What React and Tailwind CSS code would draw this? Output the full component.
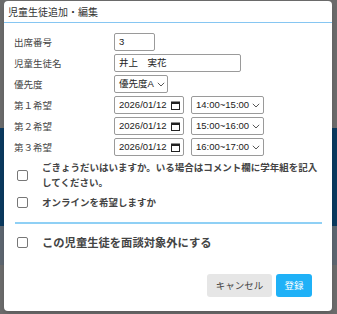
import React from 'react';

const font = { fontFamily: '"Noto Sans CJK JP", "Noto Sans", sans-serif' };
const inputFont = { fontFamily: '"Liberation Sans", "Noto Sans CJK JP", sans-serif' };

function Chevron() {
  return (
    <svg width="8" height="5" viewBox="0 0 8 5" className="ml-auto mr-[3px] shrink-0">
      <path d="M0.8 0.8l3.2 3.2L7.2 0.8" fill="none" stroke="#444" strokeWidth="0.9" />
    </svg>
  );
}

function CalendarIcon() {
  return (
    <svg width="9" height="9" viewBox="0 0 9 9" className="ml-auto mr-[3px] shrink-0">
      <rect x="0.5" y="1" width="8" height="7.5" fill="none" stroke="#222" strokeWidth="1" />
      <rect x="0.5" y="1" width="8" height="2" fill="#222" />
    </svg>
  );
}

function Box({ w, children }) {
  return (
    <div
      className={`flex items-center gap-[3px] h-full border border-[#9a9a9a] rounded-[2px] pl-[4px] text-[9.5px] text-[#222] bg-white whitespace-nowrap overflow-hidden ${w}`}
      style={inputFont}
    >
      {children}
    </div>
  );
}

function Row({ label, children }) {
  return (
    <div className="flex items-center h-[18px]">
      <div className="w-[100px] text-[9.5px] text-[#444]">{label}</div>
      <div className="flex items-center gap-[7px] h-full">{children}</div>
    </div>
  );
}

function Check() {
  return <div className="w-[11px] h-[11px] shrink-0 border border-[#777] rounded-[2px] bg-white" />;
}

function Wish({ label, time }) {
  return (
    <Row label={label}>
      <Box w="w-[70px]">
        <span>2026/01/12</span>
        <CalendarIcon />
      </Box>
      <Box w="w-[73px]">
        <span>{time}</span>
        <Chevron />
      </Box>
    </Row>
  );
}

export default function App() {
  return (
    <div className="relative w-[337px] h-[314px] overflow-hidden" style={font}>
      <div className="flex flex-col h-full">
        <div className="h-[128px] bg-[#6b6b6b]" />
        <div className="h-[98px] bg-[#0b3a5f]" />
        <div className="h-[39px] bg-[#5d6670]" />
        <div className="flex-1 bg-[#6b6b6b]" />
      </div>

      <div className="absolute left-[4px] top-[1px] w-[328px] h-[310px] bg-white rounded-[4px] shadow-md flex flex-col">
        <div className="h-[22px] flex items-center pl-[4px] border-b-[1.5px] border-[#86c6f2] text-[10px] text-[#333]">
          児童生徒追加・編集
        </div>

        <div className="flex flex-col pl-[10px] pr-[10px] pt-[10px]">
          <div className="flex flex-col gap-[3px]">
            <Row label="出席番号">
              <Box w="w-[41px]">3</Box>
            </Row>
            <Row label="児童生徒名">
              <Box w="w-[127px]">井上　実花</Box>
            </Row>
            <Row label="優先度">
              <Box w="w-[54px]">
                <span>優先度A</span>
                <Chevron />
              </Box>
            </Row>
            <Wish label="第１希望" time="14:00~15:00" />
            <Wish label="第２希望" time="15:00~16:00" />
            <Wish label="第３希望" time="16:00~17:00" />
          </div>

          <div className="flex items-center mt-[4px] pl-[3px] gap-[14px]">
            <Check />
            <div className="text-[9.5px] leading-[15px] font-bold text-[#444]">
              ごきょうだいはいますか。いる場合はコメント欄に学年組を記入してください。
            </div>
          </div>

          <div className="flex items-center mt-[5px] pl-[3px] gap-[14px] h-[15px]">
            <Check />
            <div className="text-[9.5px] leading-[15px] font-bold text-[#444]">オンラインを希望しますか</div>
          </div>

          <div className="mt-[12px] ml-[1px] h-[2px] bg-[#8fd0f5]" />

          <div className="flex items-center mt-[9px] pl-[3px] gap-[14px] h-[18px]">
            <Check />
            <div className="text-[11.3px] leading-[18px] font-bold text-[#444]">この児童生徒を面談対象外にする</div>
          </div>
        </div>

        <div className="mt-auto flex justify-end gap-[4px] pr-[20px] pb-[14px]">
          <button className="h-[23px] w-[65px] rounded-[3px] bg-[#e6e6e6] text-[9.5px] text-[#444]">キャンセル</button>
          <button className="h-[23px] w-[36px] rounded-[3px] bg-[#1fb1f7] text-[9.5px] text-white">登録</button>
        </div>
      </div>
    </div>
  );
}
